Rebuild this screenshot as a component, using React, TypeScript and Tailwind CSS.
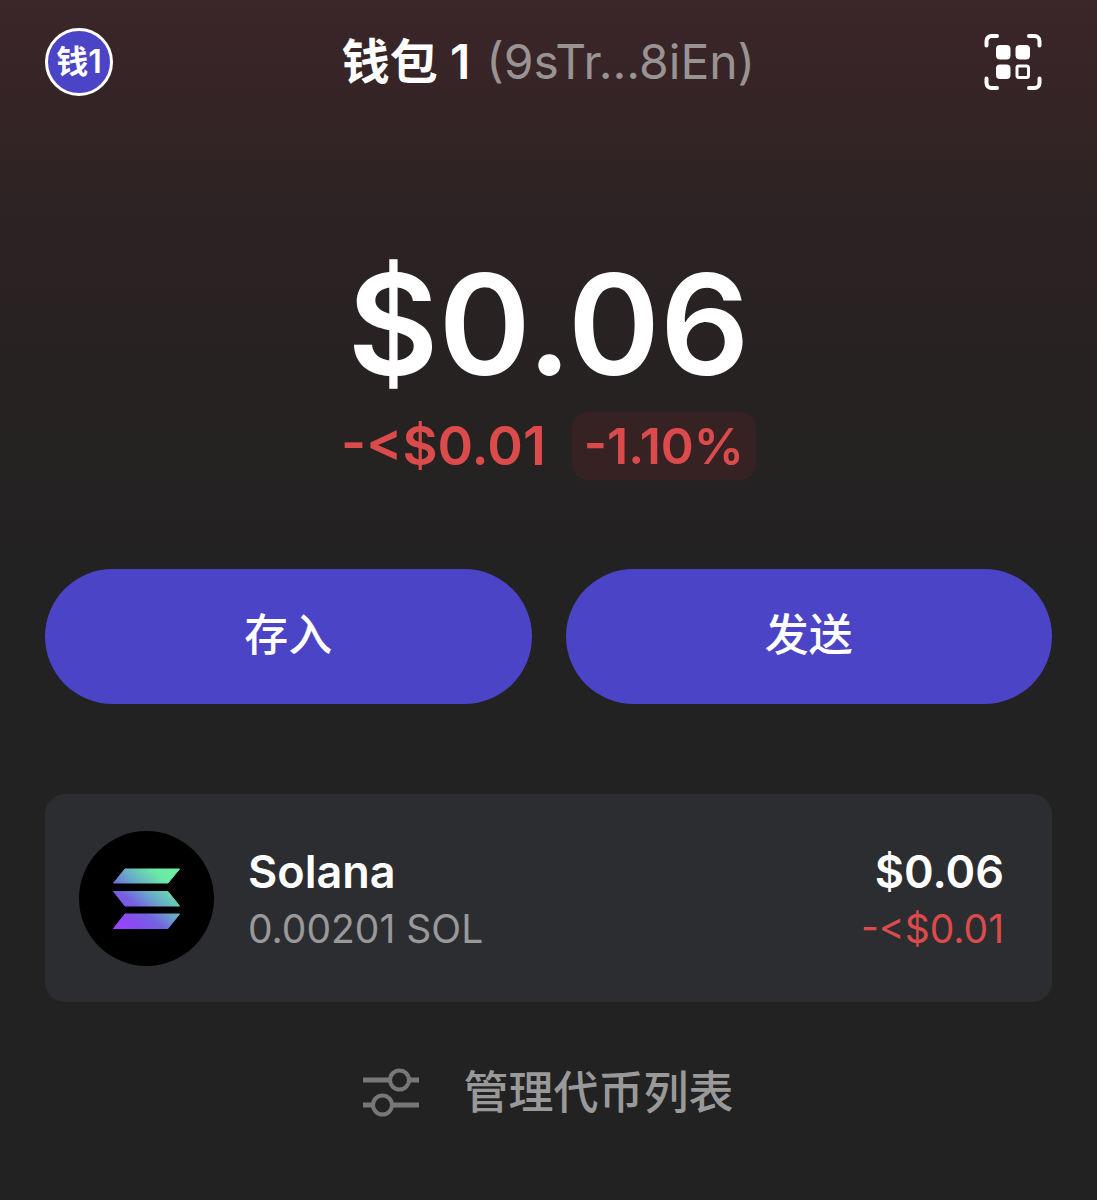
import type { ReactNode } from "react"

function ScanIcon() {
  return (
    <svg viewBox="0 0 58 58" className="size-[58px]" fill="none" aria-hidden="true">
      <g stroke="#fff" strokeWidth="4" strokeLinecap="round">
        <path d="M2.500 12.500V8a5 5 0 0 1 5-5H13" />
        <path d="M45 3h5.500a5 5 0 0 1 5 5v4.500" />
        <path d="M2.500 45.500V50a5 5 0 0 0 5 5H13" />
        <path d="M45 55h5.500a5 5 0 0 0 5-5v-4.500" />
      </g>
      <rect x="12" y="12" width="14.500" height="14.500" rx="4" fill="#fff" />
      <rect x="31.500" y="12" width="14.500" height="14.500" rx="4" fill="#fff" />
      <rect x="12" y="31.500" width="14.500" height="14.500" rx="4" fill="#fff" />
      <rect x="33" y="33" width="11.500" height="11.500" rx="2" stroke="#fff" strokeWidth="3" />
    </svg>
  )
}

function SolanaLogo() {
  return (
    <svg viewBox="0 0 135 135" className="size-[135px] shrink-0" aria-hidden="true">
      <defs>
        <linearGradient id="sol" gradientUnits="userSpaceOnUse" x1="95" y1="36" x2="41" y2="98">
          <stop offset="0" stopColor="#6ff0a4" />
          <stop offset="0.2" stopColor="#6be8a8" />
          <stop offset="0.45" stopColor="#68a9c8" />
          <stop offset="0.65" stopColor="#7463e0" />
          <stop offset="0.85" stopColor="#8a4bf2" />
          <stop offset="1" stopColor="#9945ff" />
        </linearGradient>
      </defs>
      <circle cx="67.500" cy="67.500" r="67.500" fill="#000" />
      <g fill="url(#sol)" stroke="url(#sol)" strokeWidth="1" strokeLinejoin="round">
        <path d="M46 38h54.500L89 52H34.500z" />
        <path d="M34.500 60.500H89L100.500 75H46z" />
        <path d="M46 83h54.500L89 97.500H34.500z" />
      </g>
    </svg>
  )
}

function SlidersIcon() {
  return (
    <svg viewBox="0 0 56 50" className="h-[50px] w-14" fill="none" stroke="#777" aria-hidden="true">
      <path d="M0 12h27M46 12h10M0 37h10M29 37h27" strokeWidth="5" />
      <circle cx="36.500" cy="12" r="9.500" strokeWidth="4" />
      <circle cx="19.500" cy="37" r="9.500" strokeWidth="4" />
    </svg>
  )
}

function ActionButton({ children }: { children: ReactNode }) {
  return (
    <button
      type="button"
      className="h-[135px] flex-1 rounded-full bg-[#4b44c6] pb-1 text-[44px] font-medium text-white"
    >
      {children}
    </button>
  )
}

export default function App() {
  return (
    <div className="min-h-screen bg-[#222222] bg-[linear-gradient(to_bottom,#3b2629_0px,#352426_100px,#2b2223_240px,#262222_400px,#222222_620px)] font-[Inter,'Noto_Sans_CJK_SC',sans-serif] text-white">
      <header className="flex items-center justify-between px-[45px] pt-7">
        <button
          type="button"
          className="flex size-[68px] items-center justify-center rounded-full border-3 border-white bg-[#4b44c6] pb-px text-[32px] font-semibold"
        >
          钱1
        </button>
        <h1 className="flex items-baseline gap-4 text-[48px] leading-[68px]">
          <span className="font-semibold">钱包 1</span>
          <span className="text-[#999393]">(9sTr...8iEn)</span>
        </h1>
        <button type="button" aria-label="扫描" className="flex w-[68px] justify-end pr-[10px]">
          <ScanIcon />
        </button>
      </header>

      <main className="px-[45px]">
        <section className="flex flex-col items-center pt-[140px]">
          <p className="text-[140px] leading-[176px] font-semibold">$0.06</p>
          <div className="flex items-center gap-[26px] font-semibold text-[#dc4b4b]">
            <span className="text-[54px] leading-[68px]">-&lt;$0.01</span>
            <span className="rounded-2xl bg-[#362223] px-3 text-[50px] leading-[68px]">-1.10%</span>
          </div>
        </section>

        <div className="mt-[89px] flex gap-[34px]">
          <ActionButton>存入</ActionButton>
          <ActionButton>发送</ActionButton>
        </div>

        <section className="mt-[90px] flex h-52 items-center rounded-[20px] bg-[#2c2d31] pr-12 pl-[34px]">
          <SolanaLogo />
          <div className="ml-[34px] flex-1 pt-0.5">
            <h2 className="text-[45px] leading-[60px] font-semibold">Solana</h2>
            <p className="text-[39px] leading-[54px] text-[#999999]">0.00201 SOL</p>
          </div>
          <div className="pt-0.5 text-right">
            <p className="text-[45px] leading-[60px] font-semibold">$0.06</p>
            <p className="text-[39px] leading-[54px] text-[#dc4b4b]">-&lt;$0.01</p>
          </div>
        </section>

        <button type="button" className="mx-auto mt-[57px] flex items-center gap-11 text-[45px] leading-[68px] font-medium text-[#999999]">
          <SlidersIcon />
          管理代币列表
        </button>
      </main>
    </div>
  )
}
